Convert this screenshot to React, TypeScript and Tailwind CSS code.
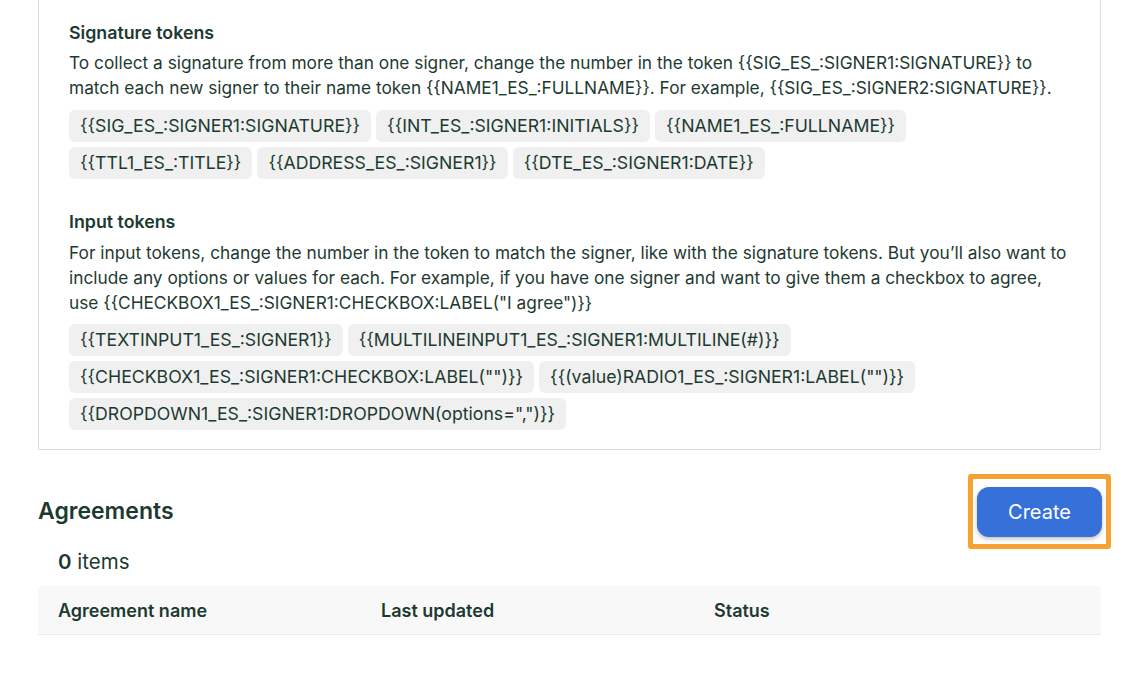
import React from "react";

const sigTokens = [
  ["{{SIG_ES_:SIGNER1:SIGNATURE}}", "{{INT_ES_:SIGNER1:INITIALS}}", "{{NAME1_ES_:FULLNAME}}"],
  ["{{TTL1_ES_:TITLE}}", "{{ADDRESS_ES_:SIGNER1}}", "{{DTE_ES_:SIGNER1:DATE}}"],
];

const inputTokens = [
  ["{{TEXTINPUT1_ES_:SIGNER1}}", "{{MULTILINEINPUT1_ES_:SIGNER1:MULTILINE(#)}}"],
  ['{{CHECKBOX1_ES_:SIGNER1:CHECKBOX:LABEL("")}}', '{{(value)RADIO1_ES_:SIGNER1:LABEL("")}}'],
  ['{{DROPDOWN1_ES_:SIGNER1:DROPDOWN(options=",")}}'],
];

function Tokens({ rows, className }: { rows: string[][]; className: string }) {
  return (
    <div className={`flex flex-col gap-[5px] ${className}`}>
      {rows.map((row, r) => (
        <div key={r} className="flex gap-[5px]">
          {row.map((t) => (
            <span key={t} className="h-8 px-[11px] flex items-center rounded-md bg-[#eff0ef] text-[17.7px] whitespace-nowrap">
              {t}
            </span>
          ))}
        </div>
      ))}
    </div>
  );
}

export default function App() {
  return (
    <div className="min-h-[700px] bg-white text-[#1d3a31] font-['Inter',sans-serif] pl-[38px] pr-[45px]">
      <div className="border border-t-0 border-[#dcdcdc] pl-[30px] pr-3 pt-[22px] pb-[19px]">
        <h3 className="text-[17.8px] font-semibold leading-[22px]">Signature tokens</h3>
        <p className="text-[17.3px] leading-[25px] mt-[6px] whitespace-nowrap">
          To collect a signature from more than one signer, change the number in the token {"{{SIG_ES_:SIGNER1:SIGNATURE}}"} to
          <br />
          match each new signer to their name token {"{{NAME1_ES_:FULLNAME}}"}. For example, {"{{SIG_ES_:SIGNER2:SIGNATURE}}"}.
        </p>
        <Tokens rows={sigTokens} className="mt-[10px]" />

        <h3 className="text-[17.8px] font-semibold leading-[22px] mt-[32px]">Input tokens</h3>
        <p className="text-[17.3px] leading-[25px] mt-[7px] whitespace-nowrap">
          For input tokens, change the number in the token to match the signer, like with the signature tokens. But you’ll also want to
          <br />
          include any options or values for each. For example, if you have one signer and want to give them a checkbox to agree,
          <br />
          use {'{{CHECKBOX1_ES_:SIGNER1:CHECKBOX:LABEL("I agree")}}'}
        </p>
        <Tokens rows={inputTokens} className="mt-[9px]" />
      </div>

      <div className="flex items-center justify-between mt-[24px]">
        <h2 className="text-[23px] font-semibold">Agreements</h2>
        <div className="border-[5px] border-[#f5a233] rounded-[3px] pl-[4px] pr-[4px] pt-[8px] pb-[7px] -mr-[10px]">
          <button className="h-[50px] w-[125px] rounded-xl bg-[#3571d9] text-white text-[20px] shadow-[0_2px_4px_rgba(0,0,0,0.25)]">
            Create
          </button>
        </div>
      </div>

      <div className="pl-5 -mt-px text-[20.5px] leading-[28px]">
        <span className="font-semibold">0</span> items
      </div>

      <div className="mt-[10px] h-[49px] bg-[#f8f8f8] border-b border-[#ececec] grid grid-cols-[323px_333px_1fr] items-center pl-5 text-[18px] font-semibold rounded-t-sm">
        <span>Agreement name</span>
        <span>Last updated</span>
        <span>Status</span>
      </div>
    </div>
  );
}
